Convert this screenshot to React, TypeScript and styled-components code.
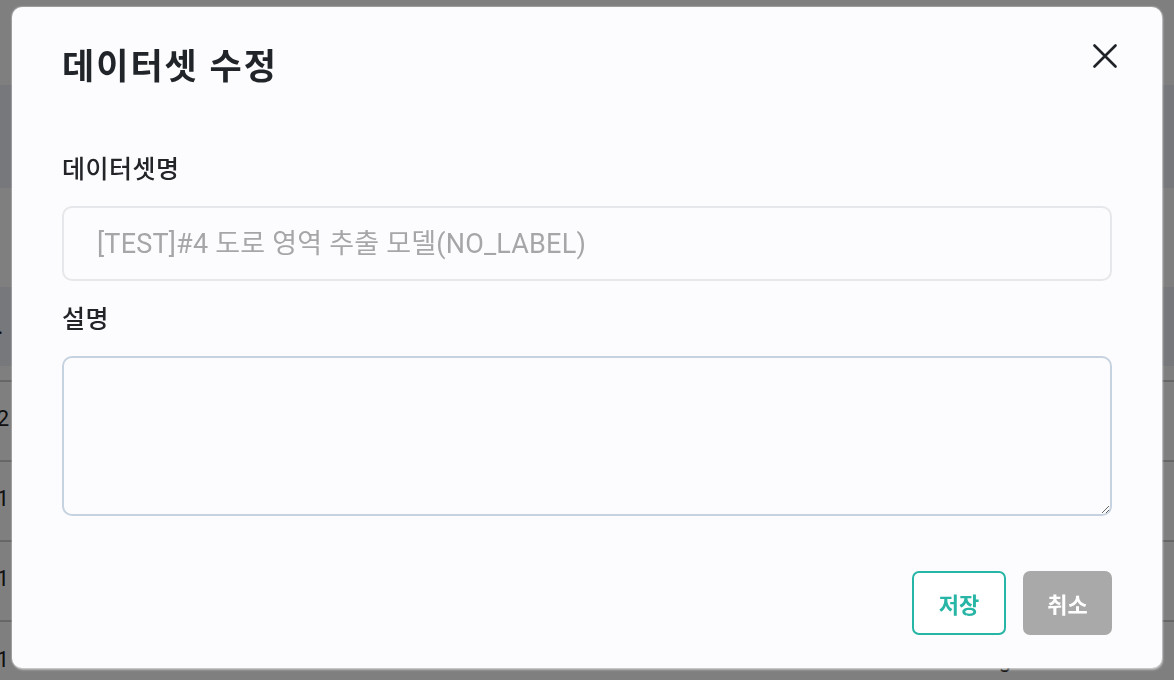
import styled, { createGlobalStyle } from "styled-components";

const rows = [
  { no: "12", tag: "seg" },
  { no: "11", tag: "box" },
  { no: "11", tag: "box" },
  { no: "11", tag: "seg" },
];

export default function App() {
  return (
    <>
      <GlobalStyle />
      <Page>
        <TopSpace />
        <HeaderBand />
        <FilterSpace />
        <Table>
          <colgroup>
            <col style={{ width: 54 }} />
            <col style={{ width: 790 }} />
            <col style={{ width: 212 }} />
            <col style={{ width: 180 }} />
          </colgroup>
          <thead>
            <tr>
              <HeadCell $align="right">No.</HeadCell>
              <HeadCell />
              <HeadCell />
              <HeadCell />
            </tr>
          </thead>
          <tbody>
            <SpacerRow>
              <td colSpan={4} />
            </SpacerRow>
            {rows.map((row, i) => (
              <tr key={i}>
                <BodyCell $align="right">{row.no}</BodyCell>
                <BodyCell />
                <BodyCell $align="right">{row.tag}</BodyCell>
                <BodyCell />
              </tr>
            ))}
          </tbody>
        </Table>
      </Page>

      <Overlay>
        <Modal role="dialog" aria-labelledby="edit-title">
          <ModalHeader>
            <Title id="edit-title">데이터셋 수정</Title>
            <CloseButton aria-label="닫기">
              <svg width="24" height="24" viewBox="0 0 24 24" fill="none">
                <path
                  d="M1.5 1.5L22.5 22.5M22.5 1.5L1.5 22.5"
                  stroke="#1f2328"
                  strokeWidth="2.6"
                  strokeLinecap="round"
                />
              </svg>
            </CloseButton>
          </ModalHeader>

          <Field>
            <Label>데이터셋명</Label>
            <TextInput
              type="text"
              placeholder="[TEST]#4 도로 영역 추출 모델(NO_LABEL)"
            />
          </Field>

          <Field>
            <Label>설명</Label>
            <TextArea />
          </Field>

          <Footer>
            <Button $variant="primary">저장</Button>
            <Button $variant="cancel">취소</Button>
          </Footer>
        </Modal>
      </Overlay>
    </>
  );
}

const GlobalStyle = createGlobalStyle`
  * {
    box-sizing: border-box;
  }

  body {
    margin: 0;
    font-family: Roboto, "Noto Sans CJK KR", sans-serif;
    background: #ffffff;
    overflow: hidden;
  }
`;

const Page = styled.div`
  width: 1174px;
  height: 680px;
  overflow: hidden;
  background: #ffffff;
`;

const TopSpace = styled.div`
  height: 85px;
`;

const HeaderBand = styled.div`
  height: 103px;
  background: #eef1f8;
`;

const FilterSpace = styled.div`
  height: 99px;
`;

const Table = styled.table`
  border-collapse: collapse;
  table-layout: fixed;
  margin-left: -45px;
  width: 1236px;
  font-size: 22px;
  color: #222222;
`;

const HeadCell = styled.th<{ $align?: "left" | "right" }>`
  height: 79px;
  background: #eef1f8;
  font-weight: 500;
  font-size: 20px;
  text-align: ${(p) => p.$align ?? "left"};
  padding: ${(p) => (p.$align === "right" ? "0 6px 0 0" : "0 0 0 40px")};
  white-space: nowrap;
  overflow: hidden;
`;

const SpacerRow = styled.tr`
  height: 15px;
`;

const BodyCell = styled.td<{ $align?: "left" | "right" }>`
  height: 80px;
  border-top: 2px solid #cccccc;
  text-align: ${(p) => p.$align ?? "left"};
  padding: ${(p) => (p.$align === "right" ? "0 0 5px 0" : "0 0 5px 40px")};
  white-space: nowrap;
  overflow: hidden;
`;

const Overlay = styled.div`
  position: fixed;
  inset: 0;
  background: rgba(0, 0, 0, 0.5);
  display: flex;
  justify-content: center;
  align-items: flex-start;
  padding-top: 7px;
`;

const Modal = styled.div`
  width: 1150px;
  height: 661px;
  background: #fcfcfe;
  border-radius: 10px;
  padding: 37px 50px 33px 50px;
  display: flex;
  flex-direction: column;
  box-shadow: 1px 2px 2px rgba(255, 255, 255, 0.45),
    0 0 1px 1px rgba(255, 255, 255, 0.25);
`;

const ModalHeader = styled.div`
  display: flex;
  align-items: flex-start;
  justify-content: space-between;
  margin-bottom: 63px;
`;

const Title = styled.h2`
  margin: 0;
  font-size: 35px;
  line-height: 48px;
  letter-spacing: 2px;
  font-weight: 700;
  color: #212529;
`;

const CloseButton = styled.button`
  width: 32px;
  height: 32px;
  margin: -4px -9px 0 0;
  padding: 0;
  border: 0;
  background: transparent;
  display: flex;
  align-items: center;
  justify-content: center;
  cursor: pointer;
`;

const Field = styled.div`
  display: flex;
  flex-direction: column;
  gap: 21px;
  margin-bottom: 24px;
`;

const Label = styled.label`
  font-size: 25px;
  line-height: 30px;
  letter-spacing: 0.5px;
  font-weight: 500;
  color: #222428;
`;

const TextInput = styled.input`
  height: 75px;
  width: 100%;
  border: 2px solid #e6e7ea;
  border-radius: 10px;
  background: #fcfcfe;
  padding: 0 33px;
  font-family: Roboto, "Noto Sans CJK KR", sans-serif;
  font-size: 27px;
  letter-spacing: 0.2px;
  color: #222222;
  outline: none;

  &::placeholder {
    color: #a6a6a8;
  }
`;

const TextArea = styled.textarea`
  height: 160px;
  width: 100%;
  border: 2px solid #c6d2df;
  border-radius: 10px;
  background: #fcfcfe;
  padding: 16px 20px;
  font-family: Roboto, "Noto Sans CJK KR", sans-serif;
  font-size: 22px;
  outline: none;
  resize: vertical;
`;

const Footer = styled.div`
  margin-top: auto;
  display: flex;
  justify-content: flex-end;
  gap: 17px;
`;

const Button = styled.button<{ $variant: "primary" | "cancel" }>`
  height: 64px;
  padding: 0;
  width: ${(p) => (p.$variant === "primary" ? "94px" : "89px")};
  border-radius: 7px;
  font-family: Roboto, "Noto Sans CJK KR", sans-serif;
  font-size: 22px;
  font-weight: 700;
  cursor: pointer;
  border: 2px solid
    ${(p) => (p.$variant === "primary" ? "#27b5a6" : "#a9a9a9")};
  background: ${(p) => (p.$variant === "primary" ? "#ffffff" : "#a9a9a9")};
  color: ${(p) => (p.$variant === "primary" ? "#27b5a6" : "#ffffff")};
`;
